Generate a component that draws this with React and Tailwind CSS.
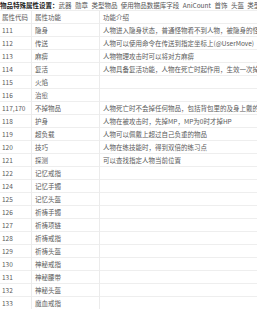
import React from 'react';

const rows = [
  ['111', '隐身', '人物进入隐身状态，普通怪物看不到人物，被隐身的怪物可以攻击'],
  ['112', '传送', '人物可以使用命令在传送到指定坐标上(@UserMove)'],
  ['113', '麻痹', '人物物理攻击时可以将对方麻痹'],
  ['114', '复活', '人物具备复活功能，人物在死亡时起作用，生效一次掉一点持久'],
  ['115', '火焰', ''],
  ['116', '治愈', ''],
  ['117,170', '不掉物品', '人物死亡时不会掉任何物品，包括背包里的及身上戴的'],
  ['118', '护身', '人物在被攻击时，先掉MP，MP为0时才掉HP'],
  ['119', '超负载', '人物可以佩戴上超过自己负重的物品'],
  ['120', '技巧', '人物在练技能时，得到双倍的练习点'],
  ['121', '探测', '可以查找指定人物当前位置'],
  ['122', '记忆戒指', ''],
  ['124', '记忆手镯', ''],
  ['125', '记忆头盔', ''],
  ['126', '祈祷手镯', ''],
  ['127', '祈祷项链', ''],
  ['128', '祈祷戒指', ''],
  ['129', '祈祷头盔', ''],
  ['130', '神秘戒指', ''],
  ['131', '神秘腰带', ''],
  ['132', '神秘头盔', ''],
  ['133', '魔血戒指', ''],
];

const Row = ({ code, name, desc }) => (
  <div className="grid grid-cols-[32px_68px_1fr] h-[13px] border-b border-[#eeeeee]">
    <div className="border-r border-[#ebebeb] pl-[2px] leading-[13px]">{code}</div>
    <div className="border-r border-[#ebebeb] pl-[3px] leading-[13px]">{name}</div>
    <div className="pl-[3px] leading-[13px]">{desc}</div>
  </div>
);

export default function App() {
  return (
    <div
      className="w-[257px] h-[309px] overflow-hidden bg-white text-[6.5px] text-[#5a5a5a] whitespace-nowrap"
      style={{ fontFamily: '"Noto Sans CJK SC", "Noto Sans", sans-serif' }}
    >
      {/* Title line */}
      <div className="h-[10px] leading-[10px] text-[#222] [word-spacing:2px]">
        <span className="font-bold">物品特殊属性设置：</span>
        <span className="text-[#555]">武器 勋章 类型物品 使用物品数据库字段 AniCount 首饰 头盔 类型物品 使用物品数据库字段 Source</span>
      </div>

      {/* Table */}
      <div className="border-t border-[#eeeeee] w-[400px]">
        <Row code="属性代码" name="属性功能" desc="功能介绍" />
        {rows.map(([code, name, desc]) => (
          <Row key={code} code={code} name={name} desc={desc} />
        ))}
      </div>
    </div>
  );
}
